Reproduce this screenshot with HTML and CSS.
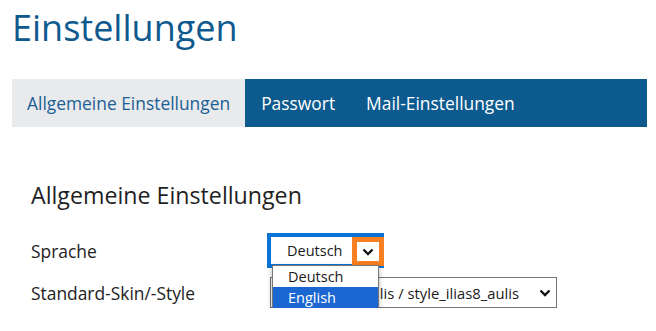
FILE: index.html
```html
<!DOCTYPE html>
<html lang="de">
<head>
<meta charset="utf-8">
<link rel="stylesheet" href="styles.css">
</head>
<body>
<div class="page">
  <h1 class="title">Einstellungen</h1>
  <nav class="tabs">
    <a class="tab active">Allgemeine Einstellungen</a>
    <a class="tab">Passwort</a>
    <a class="tab">Mail-Einstellungen</a>
  </nav>
  <section class="form">
    <h2 class="form-title">Allgemeine Einstellungen</h2>
    <div class="row">
      <label class="label">Sprache</label>
      <div class="select focused">
        <span class="value">Deutsch</span>
        <span class="arrow-mark">
          <svg width="12" height="8" viewBox="0 0 12 8"><path d="M1.5 1.5 L6 6 L10.5 1.5" fill="none" stroke="#111" stroke-width="2.3"/></svg>
        </span>
        <ul class="listbox">
          <li class="option">Deutsch</li>
          <li class="option selected">English</li>
        </ul>
      </div>
    </div>
    <div class="row row-skin">
      <label class="label">Standard-Skin/-Style</label>
      <div class="select wide">
        <span class="value">skin_ilias8_aulis / style_ilias8_aulis</span>
        <svg class="chev" width="12" height="8" viewBox="0 0 12 8"><path d="M1.5 1.5 L6 6 L10.5 1.5" fill="none" stroke="#111" stroke-width="2.3"/></svg>
      </div>
    </div>
  </section>
</div>
</body>
</html>
```
FILE: styles.css
```css
* { box-sizing: border-box; }
html, body { margin: 0; padding: 0; background: #fff; }
body {
  font-family: "Open Sans", "Noto Sans", sans-serif;
  color: #1f1f1f;
}
.page {
  padding: 0 9px 0 12px;
}
.title {
  margin: 0;
  padding-top: 4px;
  height: 79px;
  font-size: 36px;
  font-weight: 400;
  line-height: 48px;
  color: #0e5a8f;
}
.tabs {
  display: flex;
  height: 48px;
  background: #0c5a8e;
}
.tab {
  display: flex;
  align-items: center;
  padding: 0 15px 0 16px;
  font-size: 17.4px;
  color: #fff;
  text-decoration: none;
}
.tab.active {
  background: #e9eaec;
  color: #1c5f95;
  padding: 0 15px 0 15px;
}
.form {
  padding: 53px 0 0 19px;
}
.form-title {
  margin: 0 0 27px;
  font-size: 23.2px;
  font-weight: 500;
  line-height: 30px;
  color: #1f1f1f;
}
.row {
  display: flex;
  align-items: center;
}
.label {
  width: 240px;
  flex: none;
  font-size: 17.4px;
  line-height: 24px;
  color: #222;
}
.select {
  position: relative;
  display: flex;
  align-items: center;
  height: 27px;
  border: 1px solid #767676;
  background: #fff;
  font-size: 14.5px;
  color: #1a1a1a;
  padding-left: 16px;
}
.select.focused {
  width: 109px;
  border: none;
  outline: 4px solid #0a74d6;
  z-index: 2;
}
.arrow-mark {
  position: absolute;
  left: 81px;
  top: 0;
  width: 32px;
  height: 29px;
  border: 5px solid #fa7f20;
  display: flex;
  align-items: center;
  justify-content: center;
}
.listbox {
  position: absolute;
  left: 1px;
  top: 28px;
  width: 107px;
  margin: 0;
  padding: 0;
  list-style: none;
  background: #fff;
  border: 1px solid #767676;
  box-shadow: 0 2px 5px rgba(0,0,0,0.3);
}
.option {
  height: 21px;
  line-height: 21px;
  padding-left: 15px;
  font-size: 14.5px;
  color: #1a1a1a;
}
.option.selected {
  background: #1a67d2;
  color: #fff;
}
.row-skin {
  margin-top: 13px;
}
.select.wide {
  width: 287px;
  height: 31px;
  margin-left: -1px;
  justify-content: space-between;
  padding-right: 5px;
  font-size: 14.8px;
}
.chev { flex: none; }
```
